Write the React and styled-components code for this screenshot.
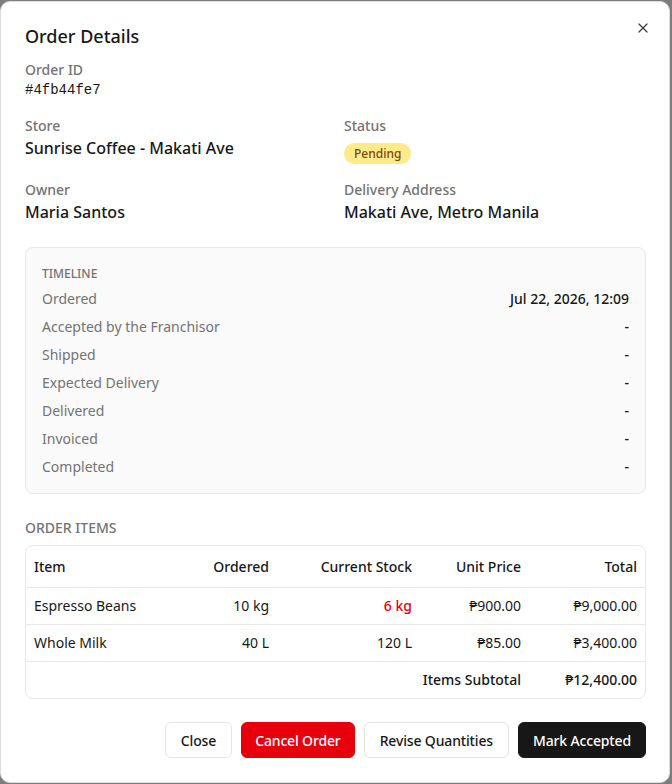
import React from 'react';
import styled, { createGlobalStyle } from 'styled-components';
import { X } from 'lucide-react';

const GlobalStyle = createGlobalStyle`
  html, body {
    margin: 0;
    padding: 0;
    background: #7d7d7d;
  }
  body {
    font-family: "Noto Sans", "Open Sans", sans-serif;
    color: #171717;
  }
  * { box-sizing: border-box; }
`;

const Modal = styled.div`
  position: relative;
  width: 670px;
  margin-top: 1px;
  background: #ffffff;
  border: 1px solid #dcdcdc;
  border-radius: 10px;
  padding: 21px 23px 24px 24px;
  display: flex;
  flex-direction: column;
`;

const CloseIcon = styled.button`
  position: absolute;
  top: 16px;
  right: 16px;
  width: 20px;
  height: 20px;
  padding: 0;
  border: none;
  background: transparent;
  color: #3f3f3f;
  display: flex;
  align-items: center;
  justify-content: center;
  cursor: pointer;
`;

const Title = styled.h2`
  margin: 0;
  font-size: 18px;
  line-height: 26px;
  font-weight: 500;
`;

const InfoGrid = styled.div`
  margin-top: 11px;
  display: grid;
  grid-template-columns: 319px 1fr;
  row-gap: 16px;
`;

const Field = styled.div`
  grid-column: ${(p) => (p.$full ? '1 / -1' : 'auto')};
  display: flex;
  flex-direction: column;
  align-items: flex-start;
`;

const Label = styled.div`
  font-size: 14px;
  line-height: 20px;
  color: #737373;
  font-weight: 500;
`;

const Value = styled.div`
  font-size: 16px;
  line-height: 24px;
  font-weight: 500;
  color: #171717;
`;

const MonoValue = styled.div`
  font-family: "Liberation Mono", "DejaVu Sans Mono", monospace;
  font-size: 14px;
  line-height: 20px;
  color: #171717;
`;

const Badge = styled.span`
  margin-top: 7px;
  display: inline-block;
  background: #fdeb8a;
  color: #7a4a0a;
  font-size: 12px;
  line-height: 17px;
  font-weight: 500;
  padding: 2px 10px;
  border-radius: 999px;
`;

const TimelineBox = styled.div`
  margin-top: 23px;
  background: #fafafa;
  border: 1px solid #e8e8e8;
  border-radius: 8px;
  padding: 18px 16px 16px 16px;
  display: flex;
  flex-direction: column;
  gap: 8px;
`;

const SectionTitle = styled.div`
  font-size: ${(p) => (p.$small ? '12px' : '14px')};
  line-height: ${(p) => (p.$small ? '16px' : '20px')};
  font-weight: 500;
  text-transform: uppercase;
  color: #737373;
  margin-bottom: ${(p) => (p.$small ? '-1px' : '0')};
`;

const TimelineRow = styled.div`
  display: flex;
  justify-content: space-between;
  font-size: 14px;
  line-height: 20px;
`;

const StepName = styled.span`
  color: #737373;
`;

const StepDate = styled.span`
  color: #171717;
  font-weight: 500;
`;

const ItemsSection = styled.div`
  margin-top: 24px;
  display: flex;
  flex-direction: column;
  gap: 7px;
`;

const Table = styled.div`
  border: 1px solid #e8e8e8;
  border-radius: 8px;
  overflow: hidden;
`;

const TableRow = styled.div`
  display: grid;
  grid-template-columns: 160px 91px 143px 109px 1fr;
  border-bottom: ${(p) => (p.$last ? 'none' : '1px solid #e8e8e8')};
`;

const Cell = styled.div`
  padding: ${(p) => (p.$head ? '11px 8px 10px' : '8px 8px')};
  font-size: 14px;
  line-height: 20px;
  text-align: ${(p) => (p.$right ? 'right' : 'left')};
  font-weight: ${(p) => (p.$bold ? 500 : 400)};
  color: ${(p) => (p.$danger ? '#e7000b' : '#171717')};
  grid-column: ${(p) => p.$span || 'auto'};
`;

const Footer = styled.div`
  margin-top: 23px;
  display: flex;
  justify-content: flex-end;
  gap: 9px;
`;

const Button = styled.button`
  height: 36px;
  padding: 0 ${(p) => (p.$variant === 'danger' ? '13px' : p.$variant ? '14px' : '15px')};
  border-radius: 6px;
  font-family: inherit;
  font-size: 14px;
  font-weight: 500;
  letter-spacing: -0.15px;
  cursor: pointer;
  border: 1px solid
    ${(p) => (p.$variant === 'danger' ? '#e7000b' : p.$variant === 'primary' ? '#171717' : '#e5e5e5')};
  background: ${(p) =>
    p.$variant === 'danger' ? '#e7000b' : p.$variant === 'primary' ? '#171717' : '#ffffff'};
  color: ${(p) => (p.$variant === 'danger' || p.$variant === 'primary' ? '#ffffff' : '#171717')};
`;

const timeline = [
  ['Ordered', 'Jul 22, 2026, 12:09'],
  ['Accepted by the Franchisor', '-'],
  ['Shipped', '-'],
  ['Expected Delivery', '-'],
  ['Delivered', '-'],
  ['Invoiced', '-'],
  ['Completed', '-'],
];

const items = [
  { name: 'Espresso Beans', ordered: '10 kg', stock: '6 kg', low: true, price: '₱900.00', total: '₱9,000.00' },
  { name: 'Whole Milk', ordered: '40 L', stock: '120 L', low: false, price: '₱85.00', total: '₱3,400.00' },
];

export default function App() {
  return (
    <>
      <GlobalStyle />
      <Modal>
        <CloseIcon aria-label="Close">
          <X size={16} strokeWidth={1.8} />
        </CloseIcon>
        <Title>Order Details</Title>

        <InfoGrid>
          <Field $full>
            <Label>Order ID</Label>
            <MonoValue>#4fb44fe7</MonoValue>
          </Field>
          <Field>
            <Label>Store</Label>
            <Value>Sunrise Coffee - Makati Ave</Value>
          </Field>
          <Field>
            <Label>Status</Label>
            <Badge>Pending</Badge>
          </Field>
          <Field>
            <Label>Owner</Label>
            <Value>Maria Santos</Value>
          </Field>
          <Field>
            <Label>Delivery Address</Label>
            <Value>Makati Ave, Metro Manila</Value>
          </Field>
        </InfoGrid>

        <TimelineBox>
          <SectionTitle $small>Timeline</SectionTitle>
          {timeline.map(([name, date]) => (
            <TimelineRow key={name}>
              <StepName>{name}</StepName>
              <StepDate>{date}</StepDate>
            </TimelineRow>
          ))}
        </TimelineBox>

        <ItemsSection>
          <SectionTitle>Order Items</SectionTitle>
          <Table>
            <TableRow>
              <Cell $head $bold>Item</Cell>
              <Cell $head $bold $right>Ordered</Cell>
              <Cell $head $bold $right>Current Stock</Cell>
              <Cell $head $bold $right>Unit Price</Cell>
              <Cell $head $bold $right>Total</Cell>
            </TableRow>
            {items.map((it) => (
              <TableRow key={it.name}>
                <Cell>{it.name}</Cell>
                <Cell $right>{it.ordered}</Cell>
                <Cell $right $danger={it.low} $bold={it.low}>{it.stock}</Cell>
                <Cell $right>{it.price}</Cell>
                <Cell $right>{it.total}</Cell>
              </TableRow>
            ))}
            <TableRow $last>
              <Cell $span="1 / 5" $right $bold>Items Subtotal</Cell>
              <Cell $right $bold>₱12,400.00</Cell>
            </TableRow>
          </Table>
        </ItemsSection>

        <Footer>
          <Button>Close</Button>
          <Button $variant="danger">Cancel Order</Button>
          <Button>Revise Quantities</Button>
          <Button $variant="primary">Mark Accepted</Button>
        </Footer>
      </Modal>
    </>
  );
}
